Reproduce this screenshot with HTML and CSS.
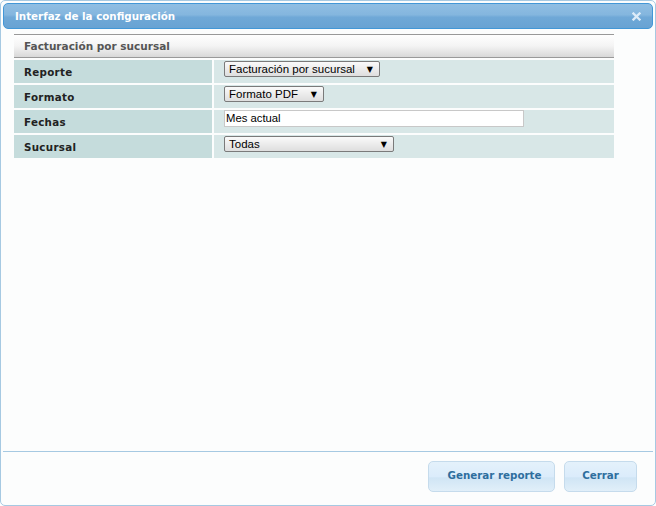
FILE: index.html
```html
<!DOCTYPE html>
<html>
<head>
<meta charset="utf-8">
<link rel="stylesheet" href="styles.css">
</head>
<body>
<div class="dialog">
  <div class="titlebar">
    <span class="title">Interfaz de la configuración</span>
    <svg class="close" width="9" height="9" viewBox="0 0 9 9"><path d="M1.5 1.5 L7.5 7.5 M7.5 1.5 L1.5 7.5" stroke="#dcebf8" stroke-width="2.3" stroke-linecap="square"/></svg>
  </div>
  <div class="content">
    <table class="form">
      <tr><th colspan="2" class="head">Facturación por sucursal</th></tr>
      <tr>
        <td class="label">Reporte</td>
        <td class="value"><span class="select w-reporte"><span>Facturación por sucursal</span><span class="arrow">▼</span></span></td>
      </tr>
      <tr>
        <td class="label">Formato</td>
        <td class="value"><span class="select w-formato"><span>Formato PDF</span><span class="arrow">▼</span></span></td>
      </tr>
      <tr>
        <td class="label">Fechas</td>
        <td class="value"><span class="input">Mes actual</span></td>
      </tr>
      <tr>
        <td class="label">Sucursal</td>
        <td class="value"><span class="select w-sucursal"><span>Todas</span><span class="arrow">▼</span></span></td>
      </tr>
    </table>
  </div>
  <div class="footer">
    <button class="btn btn-gen">Generar reporte</button>
    <button class="btn btn-close">Cerrar</button>
  </div>
</div>
</body>
</html>
```
FILE: styles.css
```css
html, body { margin: 0; padding: 0; background: #ffffff; }
body { font-family: "DejaVu Sans", Verdana, sans-serif; }
.dialog {
  width: 656px; height: 506px; box-sizing: border-box;
  border: 1px solid #a6c9e2; border-radius: 5px;
  background: #fcfdfd; padding: 2px;
  display: flex; flex-direction: column;
}
.titlebar {
  height: 26px; box-sizing: border-box;
  border: 1px solid #4297d7; border-radius: 5px;
  background: linear-gradient(to bottom, #90bee3 0%, #84b6de 45%, #6fa8d7 55%, #68a3d3 100%);
  display: flex; align-items: center; justify-content: space-between;
  padding: 0 11px 0 11px;
}
.title { color: #ffffff; font-weight: bold; font-size: 10.3px; }
.close { display: block; margin-top: 1px; }
.content { flex: 1; padding: 3px 0 0 9px; }
.form { border-collapse: separate; border-spacing: 2px; width: 604px; }
.form td, .form th { padding: 0; }
.head {
  height: 22px; text-align: left; padding-left: 10px !important;
  border-top: 1px solid #999999; border-bottom: 1px solid #999999;
  background: linear-gradient(to bottom, #ffffff 0%, #f4f4f4 50%, #d8d8d8 100%);
  font-size: 10.5px; font-weight: bold; color: #555555;
}
.label {
  width: 188px; height: 23px; padding-left: 10px !important;
  background: #c5dcdc; font-size: 10.3px; font-weight: bold; color: #222222; letter-spacing: 0.3px;
}
.value { background: #d8e7e7; padding-left: 10px !important; vertical-align: top; }
.select {
  display: inline-flex; align-items: center; justify-content: space-between;
  height: 16px; box-sizing: border-box; padding: 0 6px 0 4px; margin-top: 1px;
  border: 1px solid #7a7a7a; border-radius: 2px;
  background: linear-gradient(to bottom, #fafafa, #dedede);
  font-family: "Liberation Sans", Arial, sans-serif; font-size: 11.5px; color: #000;
  white-space: nowrap; vertical-align: top;
}
.arrow { font-family: "DejaVu Sans", sans-serif; font-size: 8px; margin-left: 6px; }
.w-reporte { width: 156px; }
.w-formato { width: 100px; }
.w-sucursal { width: 170px; }
.input {
  display: inline-block; width: 300px; height: 17px; box-sizing: border-box;
  border: 1px solid #c8c8c8; background: #fff;
  font-family: "Liberation Sans", Arial, sans-serif; font-size: 11.3px; line-height: 15px; padding-left: 1px;
  vertical-align: top; white-space: nowrap;
}
.footer {
  height: 52px; box-sizing: border-box; border-top: 1px solid #a6c9e2;
  display: flex; justify-content: flex-end; align-items: flex-start;
  padding: 9px 16px 0 0; gap: 9px;
}
.btn {
  height: 31px; box-sizing: border-box; margin: 0; padding: 0 0 3px 0;
  border: 1px solid #c5dbec; border-radius: 5px;
  background: linear-gradient(to bottom, #e4f1fb 0%, #dbecfb 50%, #d0e5f5 55%, #e1eff9 100%);
  color: #2e6e9e; font-family: "DejaVu Sans", Verdana, sans-serif; font-weight: bold; font-size: 10.3px;
}
.btn-gen { width: 127px; padding-left: 6px; }
.btn-close { width: 73px; }
```
